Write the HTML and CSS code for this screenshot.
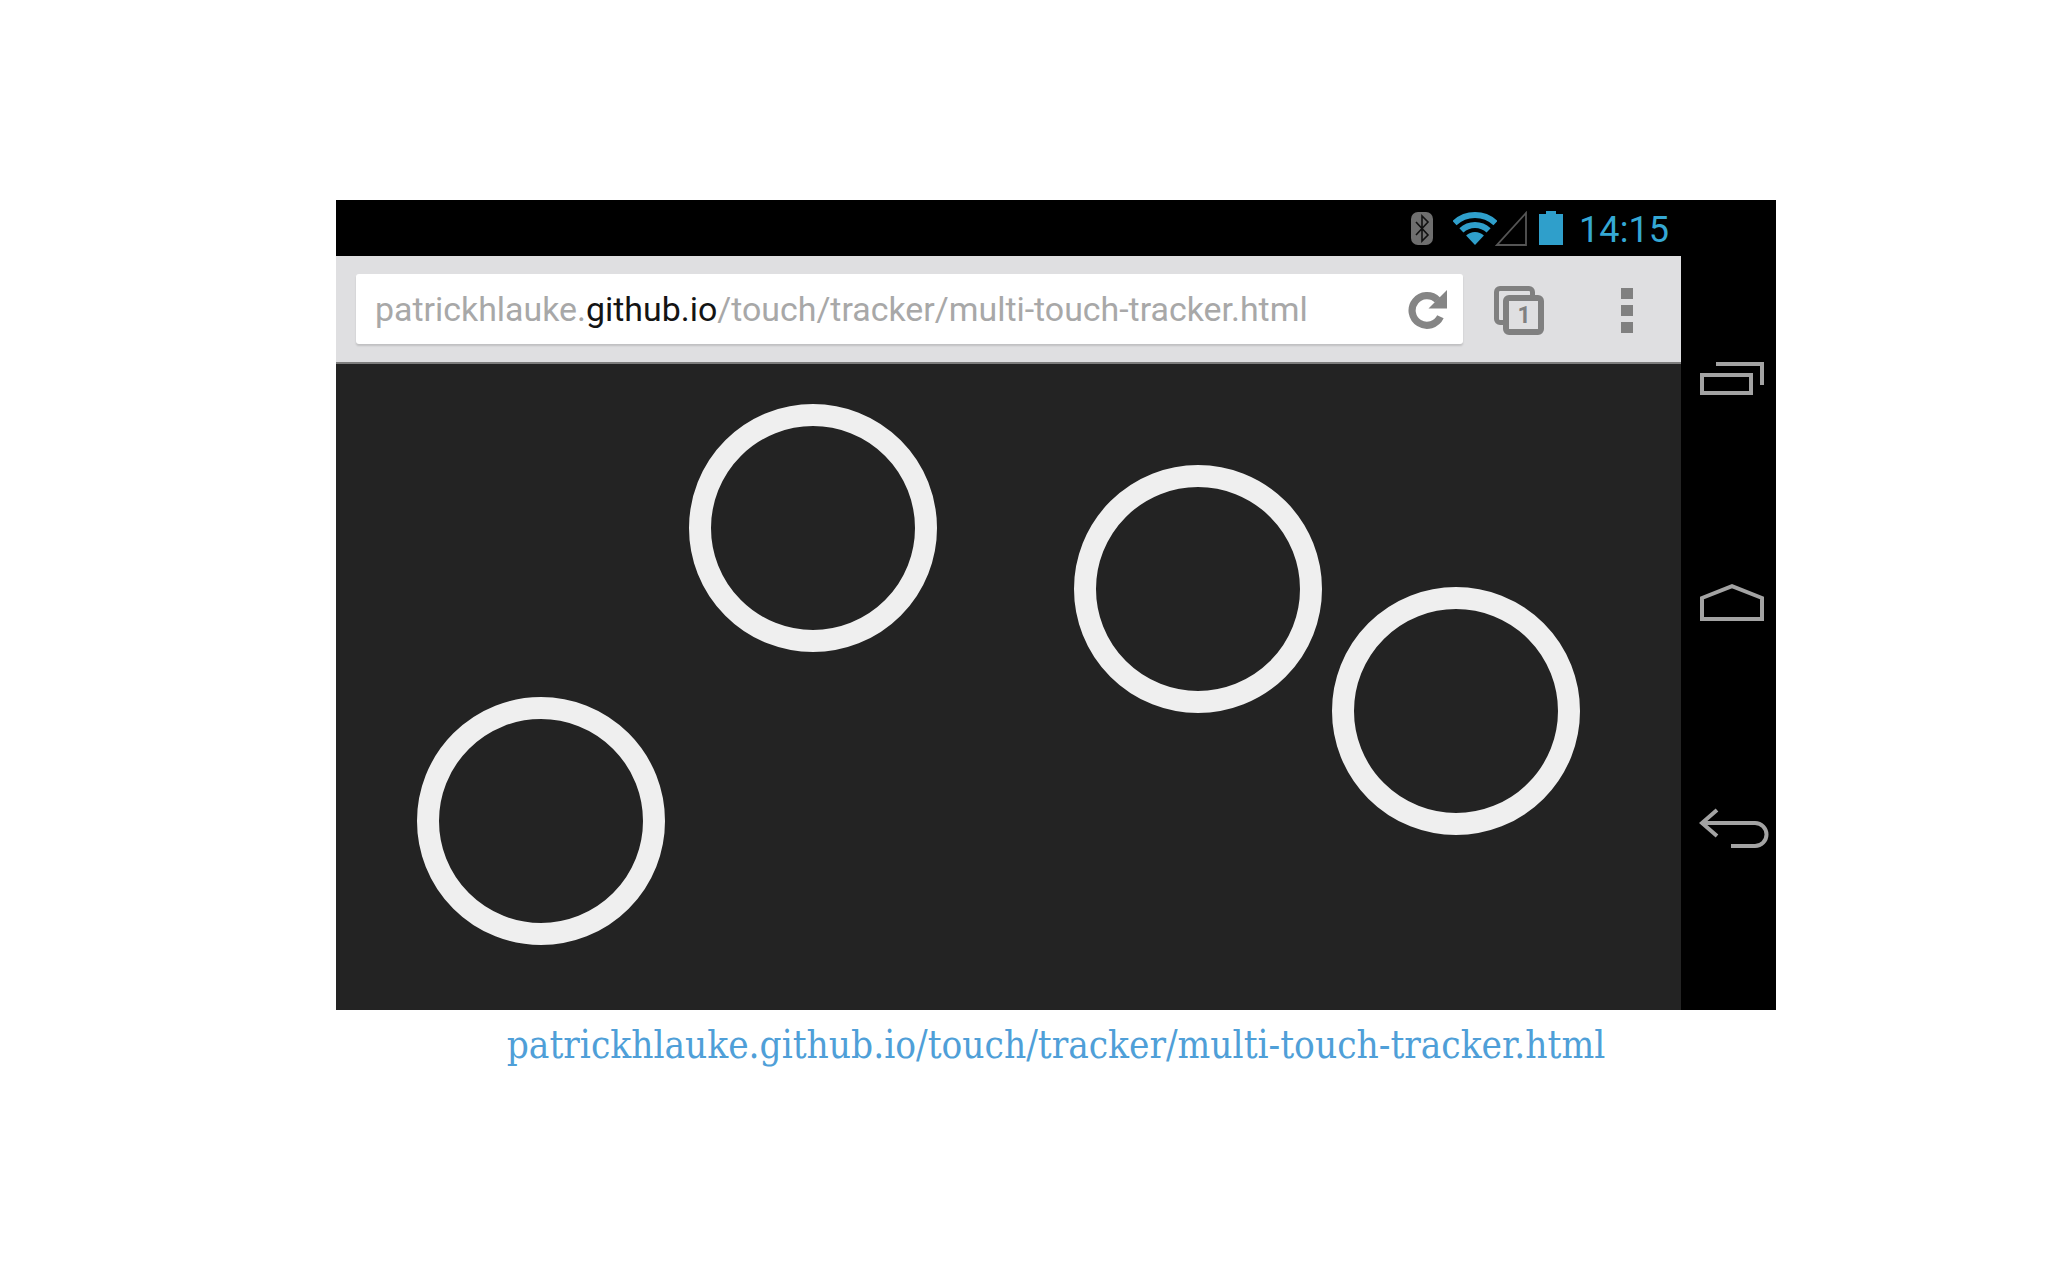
FILE: index.html
```
<!DOCTYPE html>
<html lang="en">
<head>
<meta charset="utf-8">
<title>Multi-touch tracker</title>
<link rel="stylesheet" href="styles.css">
</head>
<body>
<figure class="figure">
  <div class="phone">
    <div class="statusbar">
      <svg class="ic-bt" viewBox="0 0 22 33"><rect width="22" height="33" rx="7" fill="#6e6e6e"/><path d="M5 10l12 13-6 6V4l6 6L5 23" fill="none" stroke="#111" stroke-width="1.6"/></svg>
      <svg class="ic-wifi" viewBox="0 0 44 33"><path d="M1.500 11.100A30 30 0 0 1 42.500 11.100" fill="none" stroke="#2f9fcb" stroke-width="6"/><path d="M8.400 18.400A20 20 0 0 1 35.600 18.400" fill="none" stroke="#2f9fcb" stroke-width="6"/><path d="M22 33L13.100 23.500A13 13 0 0 1 30.900 23.500Z" fill="#2f9fcb"/></svg>
      <svg class="ic-signal" viewBox="0 0 32 35"><path d="M31 2V34H2Z" fill="none" stroke="#555" stroke-width="1.800"/></svg>
      <svg class="ic-battery" viewBox="0 0 24 34"><path d="M7 3V0H17V3H24V34H0V3Z" fill="#2f9fcb"/></svg>
      <span class="clock">14:15</span>
    </div>
    <div class="body-row">
      <div class="browser">
        <div class="toolbar">
          <div class="omnibox">
            <span class="url">patrickhlauke.<b class="host">github.io</b>/touch/tracker/multi-touch-tracker.html</span>
            <svg class="ic-reload" viewBox="0 0 39 39"><path d="M31.600 27.100A14.500 14.500 0 1 1 28.800 10.700" fill="none" stroke="#858585" stroke-width="7"/><path d="M38 1V19H20Z" fill="#858585"/></svg>
          </div>
          <svg class="ic-tabs" viewBox="0 0 50 49"><path d="M9 36.500H6A3.500 3.500 0 0 1 2.500 33V6A3.500 3.500 0 0 1 6 2.500H35A3.500 3.500 0 0 1 38.500 6V10" fill="none" stroke="#808080" stroke-width="5"/><rect x="12" y="12" width="35" height="34" rx="3" fill="#dfdfe1" stroke="#808080" stroke-width="6"/><text x="30" y="37" class="tabcount">1</text></svg>
          <div class="menu"><i></i><i></i><i></i></div>
        </div>
        <div class="canvas">
          <i class="touch t1"></i>
          <i class="touch t2"></i>
          <i class="touch t3"></i>
          <i class="touch t4"></i>
        </div>
      </div>
      <nav class="navbar">
        <svg class="ic-recents" viewBox="0 0 64 33"><path d="M16 2H62V23" fill="none" stroke="#a3a3a3" stroke-width="4"/><rect x="2" y="13" width="49" height="18" fill="none" stroke="#a3a3a3" stroke-width="4"/></svg>
        <svg class="ic-home" viewBox="0 0 64 37"><path d="M2 35V14L32 2.200L62 14V35Z" fill="none" stroke="#a3a3a3" stroke-width="4"/></svg>
        <svg class="ic-back" viewBox="0 0 71 40"><path d="M18 2L3 15L18 28M3 15H56A11.500 11.500 0 0 1 56 38H32" fill="none" stroke="#a3a3a3" stroke-width="4"/></svg>
      </nav>
    </div>
  </div>
  <figcaption class="caption">patrickhlauke.github.io/touch/tracker/multi-touch-tracker.html</figcaption>
</figure>
</body>
</html>
```
FILE: styles.css
```
* { box-sizing: border-box; }
html, body { margin: 0; height: 100%; background: #fff; }
.figure { margin: 0; padding: 200px 272px 0 336px; }
.phone { width: 1440px; height: 810px; background: #000; display: flex; flex-direction: column; }
.statusbar { height: 56px; flex: none; display: flex; align-items: center; padding: 0 109px 0 0; justify-content: flex-end; }
.statusbar svg { display: block; flex: none; }
.ic-bt { width: 22px; height: 33px; margin-right: 20px; margin-top: 1px; }
.ic-wifi { width: 44px; height: 33px; margin-right: -2px; margin-top: 1px; }
.ic-signal { width: 32px; height: 35px; margin-right: 12px; }
.ic-battery { width: 24px; height: 34px; margin-right: 16px; margin-top: -1px; }
.clock { font: 400 36px/1 Roboto, sans-serif; color: #35a8d4; letter-spacing: 0.1px; width: 88px; white-space: nowrap; margin-top: 4px; }
.body-row { flex: 1; display: flex; min-height: 0; }
.browser { width: 1345px; display: flex; flex-direction: column; }
.toolbar { height: 108px; flex: none; background: #dfdfe1; border-bottom: 2px solid #7d7d7d; display: flex; align-items: flex-start; padding: 18px 0 0 20px; }
.omnibox { width: 1107px; height: 70px; background: #fff; border-radius: 3px; box-shadow: 0 2px 2px rgba(0,0,0,.14); display: flex; align-items: center; padding: 0 15px 0 19px; justify-content: space-between; }
.url { font: 400 33.900px/1 Roboto, sans-serif; color: #a8a8a8; white-space: nowrap; padding-top: 2px; }
.host { font-weight: 400; color: #141414; }
.ic-reload { width: 40px; height: 40px; display: block; flex: none; }
.ic-tabs { width: 50px; height: 49px; display: block; flex: none; margin: 12px 0 0 31px; }
.tabcount { font: 700 23px Roboto, sans-serif; fill: #808080; text-anchor: middle; }
.menu { display: flex; flex-direction: column; gap: 6px; margin: 14px 0 0 77px; }
.menu i { display: block; width: 12px; height: 11px; background: #808080; }
.canvas { flex: 1; background: #232323; position: relative; }
.touch { position: absolute; width: 248px; height: 248px; border: 22px solid #efefef; border-radius: 50%; }
.t1 { left: 353px; top: 40px; }
.t2 { left: 738px; top: 101px; }
.t3 { left: 996px; top: 223px; }
.t4 { left: 81px; top: 333px; }
.navbar { flex: 1; display: flex; flex-direction: column; align-items: flex-start; padding: 106px 0 0 19px; }
.navbar svg { display: block; flex: none; }
.ic-recents { width: 64px; height: 33px; }
.ic-home { width: 64px; height: 37px; margin-top: 189px; }
.ic-back { width: 71px; height: 40px; margin: 187px 0 0 -1px; }
.caption { width: 1440px; margin-top: 12px; text-align: center; font: 400 38.400px/46px "DejaVu Serif Condensed", "DejaVu Serif", serif; color: #4f9fd8; white-space: nowrap; }
```
